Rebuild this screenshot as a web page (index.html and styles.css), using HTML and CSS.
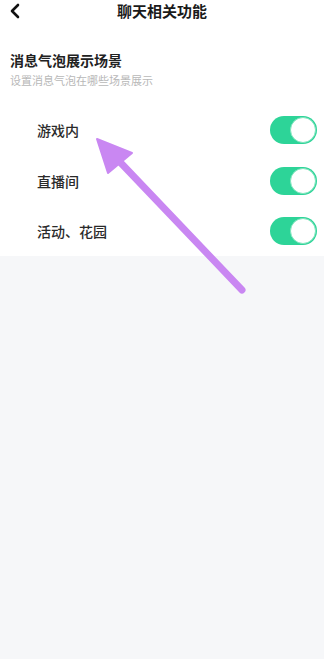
FILE: index.html
```html
<!DOCTYPE html>
<html lang="zh-CN">
<head>
    <meta charset="UTF-8">
    <meta name="viewport" content="width=device-width, initial-scale=1.0">
    <title>聊天相关功能</title>
    <link rel="stylesheet" href="styles.css">
</head>
<body>
    <div class="page">
        <div class="header">
            <a class="back-button">
                <svg width="12" height="16" viewBox="0 0 12 16"><path d="M9 2 L3 8 L9 14" fill="none" stroke="#111" stroke-width="2.6" stroke-linecap="round" stroke-linejoin="round"/></svg>
            </a>
            <h1>聊天相关功能</h1>
        </div>

        <div class="section">
            <div class="section-title">消息气泡展示场景</div>
            <div class="section-desc">设置消息气泡在哪些场景展示</div>
        </div>

        <div class="list">
            <div class="row">
                <span class="label">游戏内</span>
                <span class="switch on"><span class="knob"></span></span>
            </div>
            <div class="row">
                <span class="label">直播间</span>
                <span class="switch on"><span class="knob"></span></span>
            </div>
            <div class="row last">
                <span class="label">活动、花园</span>
                <span class="switch on"><span class="knob"></span></span>
            </div>
        </div>

        <div class="rest"></div>

        <!-- 注释用的箭头 -->
        <svg class="pointer" width="324" height="659" viewBox="0 0 324 659">
            <line x1="119" y1="161" x2="242" y2="290" stroke="#c987f2" stroke-width="7" stroke-linecap="round"/>
            <polygon points="97,139 108,173 132,153" fill="#c987f2" stroke="#c987f2" stroke-width="2" stroke-linejoin="round"/>
        </svg>
    </div>
</body>
</html>
```

FILE: styles.css
```css
body {
    margin: 0;
    background-color: #f6f7f9;
    font-family: "Noto Sans CJK SC", "Noto Sans", sans-serif;
    color: #222;
}

.page {
    position: relative;
    width: 324px;
    height: 659px;
    overflow: hidden;
}

.header {
    position: relative;
    height: 21px;
    background-color: #fff;
    display: flex;
    align-items: center;
    justify-content: center;
}

.header .back-button {
    position: absolute;
    left: 9px;
    top: 3px;
    display: flex;
}

.header h1 {
    margin: 0;
    font-size: 15px;
    font-weight: 700;
    line-height: 21px;
    color: #1a1a1a;
}

.section {
    background-color: #fff;
    padding: 30px 10px 0;
}

.section-title {
    font-size: 14px;
    font-weight: 700;
    line-height: 18px;
    color: #222;
}

.section-desc {
    margin-top: 3px;
    font-size: 11px;
    line-height: 16px;
    color: #b8b8b8;
}

.list {
    background-color: #fff;
    padding-top: 16px;
}

.row {
    height: 51px;
    display: flex;
    align-items: center;
    justify-content: space-between;
    padding: 0 7px 0 37px;
}

.row.last {
    height: 50px;
}

.row .label {
    font-size: 14px;
    font-weight: 500;
    color: #2a2a2a;
}

.switch {
    position: relative;
    width: 47px;
    height: 28px;
    border-radius: 14px;
    background-color: #2dd498;
}

.switch .knob {
    position: absolute;
    right: 1px;
    top: 1px;
    width: 24px;
    height: 24px;
    border-radius: 50%;
    background-color: #fff;
    border: 1px solid #7fe4bd;
}

.pointer {
    position: absolute;
    left: 0;
    top: 0;
    pointer-events: none;
}
```
